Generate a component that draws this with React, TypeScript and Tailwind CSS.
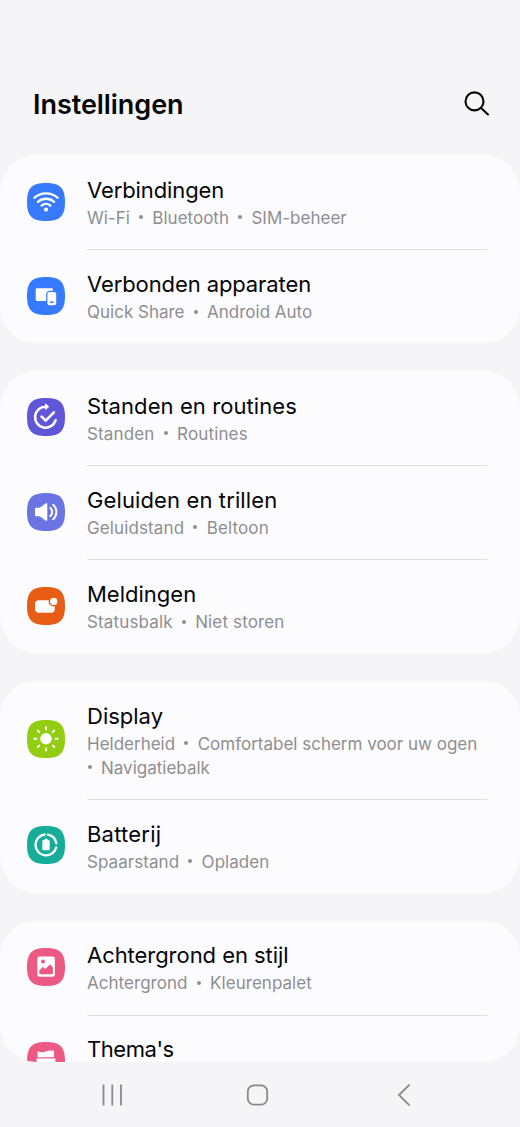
import type { ReactNode } from "react";

interface SettingItem {
    title: string;
    titleClass?: string; // Letter spacing for the title
    lines: string[][]; // Each line holds the parts that are separated by bullets
    linesClass?: string;
    color: string;
    icon: ReactNode;
}

const WifiIcon = (
    <g fill="none" stroke="#fff" strokeWidth="2.3" strokeLinecap="round">
        <path d="M7.3 14.8a17.6 17.6 0 0 1 23.4 0" />
        <path d="M10.9 18.9a12 12 0 0 1 16.2 0" />
        <path d="M14.6 22.6a6.6 6.6 0 0 1 8.8 0" />
        <circle cx="19" cy="26.6" r="2.1" fill="#fff" stroke="none" />
    </g>
);

const DevicesIcon = (
    <g>
        <rect x="8.7" y="11.2" width="17.2" height="12.8" rx="1.4" fill="#fff" />
        <path d="M19.2 24.6v-7.3c0-2 1.4-3.6 3.4-3.6h4v10.9z" fill="#387aff" />
        <rect x="20.4" y="14.9" width="8.8" height="13.4" rx="2" fill="#fff" />
        <path d="M23.6 25.2h2.4" stroke="#387aff" strokeWidth="1.6" strokeLinecap="round" />
    </g>
);

const RoutinesIcon = (
    <g fill="none" stroke="#fff" strokeWidth="2.6" strokeLinecap="round" strokeLinejoin="round">
        <path d="M18.6 8.7a10.5 10.5 0 1 0 10 13.6" />
        <path d="M14.6 18.6l4.1 4 8.2-8.2" />
        <path d="M18.8 6.2l3 2.5-3 2.5z" fill="#fff" strokeWidth="1" />
    </g>
);

const SoundIcon = (
    <g fill="none" stroke="#fff" strokeWidth="2" strokeLinecap="round">
        <path
            d="M9.3 14.7h3.4l6.3-4.5c.6-.4 1.3 0 1.3.7v16.2c0 .7-.7 1.1-1.3.7l-6.3-4.5H9.3c-.8 0-1.3-.5-1.3-1.3v-6c0-.8.5-1.3 1.3-1.3z"
            fill="#fff"
            stroke="none"
        />
        <path d="M23.4 14.9a5.6 5.6 0 0 1 0 8.2" />
        <path d="M26.2 11.8a9.8 9.8 0 0 1 0 14.4" />
    </g>
);

const NotificationIcon = (
    <g>
        <rect x="8" y="13.2" width="19.8" height="12.6" rx="4" fill="#fff" />
        <circle cx="26.7" cy="14.4" r="5.1" fill="#e85d16" />
        <circle cx="26.7" cy="14.4" r="3.6" fill="#fff" />
    </g>
);

const DisplayIcon = (
    <g stroke="#fff" strokeWidth="2" strokeLinecap="round">
        <circle cx="19" cy="18.8" r="5.7" fill="#fff" stroke="none" />
        {[0, 45, 90, 135, 180, 225, 270, 315].map((angle) => (
            <path key={angle} d="M19 9.2V7.2" transform={`rotate(${angle} 19 18.8)`} />
        ))}
    </g>
);

const BatteryIcon = (
    <g fill="none" stroke="#fff" strokeWidth="2.3">
        <path d="M17.6 8.5a10.5 10.5 0 1 0 11.6 12.9" strokeLinecap="round" />
        <path d="M21 8.7a10.5 10.5 0 0 1 8.3 8.3" strokeLinecap="round" />
        <path
            d="M17.4 13.6c0-.5.3-.8.8-.8h1.6c.5 0 .8.3.8.8v.5h.7c.8 0 1.4.6 1.4 1.4v7.4c0 .8-.6 1.4-1.4 1.4h-4.6c-.8 0-1.4-.6-1.4-1.4v-7.4c0-.8.6-1.4 1.4-1.4h.7z"
            fill="#fff"
            stroke="none"
        />
    </g>
);

const WallpaperIcon = (
    <g>
        <rect x="10.3" y="8.5" width="17.6" height="20.2" rx="2.6" fill="#fff" />
        <circle cx="16" cy="13.4" r="2" fill="#ed5985" />
        <path
            d="M12.3 22.6l2.8-3c.5-.5 1.1-.5 1.6 0l1.6 1.5 4-4c.5-.5 1.1-.5 1.6 0l2 2.3v5.8c0 .6-.5 1.1-1.1 1.1H13.4c-.6 0-1.1-.5-1.1-1.1z"
            fill="#ed5985"
        />
    </g>
);

const ThemesIcon = (
    <g fill="#fff">
        <path d="M10.6 9.2c3 1.3 5.3 1.2 8.2.2 3-1 5.6-1 8.2-.5v6.4H10.6z" />
        <path d="M9.6 16.6h18.8v8a2 2 0 0 1-2 2H11.6a2 2 0 0 1-2-2z" />
    </g>
);

const groups: SettingItem[][] = [
    [
        {
            title: "Verbindingen",
            titleClass: "tracking-[-0.1px]",
            lines: [["Wi-Fi", "Bluetooth", "SIM-beheer"]],
            color: "#387aff",
            icon: WifiIcon,
        },
        {
            title: "Verbonden apparaten",
            titleClass: "tracking-[-0.1px]",
            lines: [["Quick Share", "Android Auto"]],
            color: "#387aff",
            icon: DevicesIcon,
        },
    ],
    [
        {
            title: "Standen en routines",
            titleClass: "tracking-[0.08px]",
            lines: [["Standen", "Routines"]],
            linesClass: "tracking-[0.15px]",
            color: "#6256d8",
            icon: RoutinesIcon,
        },
        {
            title: "Geluiden en trillen",
            titleClass: "tracking-[0.12px]",
            lines: [["Geluidstand", "Beltoon"]],
            linesClass: "tracking-[0.12px]",
            color: "#6b73e5",
            icon: SoundIcon,
        },
        {
            title: "Meldingen",
            lines: [["Statusbalk", "Niet storen"]],
            linesClass: "tracking-[0.14px]",
            color: "#e85d16",
            icon: NotificationIcon,
        },
    ],
    [
        {
            title: "Display",
            lines: [["Helderheid", "Comfortabel scherm voor uw ogen"], ["", "Navigatiebalk"]],
            color: "#93cd12",
            icon: DisplayIcon,
        },
        {
            title: "Batterij",
            titleClass: "tracking-[0.22px]",
            lines: [["Spaarstand", "Opladen"]],
            linesClass: "tracking-[0.05px]",
            color: "#16ae9a",
            icon: BatteryIcon,
        },
    ],
    [
        {
            title: "Achtergrond en stijl",
            titleClass: "tracking-[-0.05px]",
            lines: [["Achtergrond", "Kleurenpalet"]],
            linesClass: "tracking-[0.04px]",
            color: "#ed5985",
            icon: WallpaperIcon,
        },
        {
            title: "Thema's",
            titleClass: "tracking-[-0.45px]",
            lines: [],
            color: "#ed5985",
            icon: ThemesIcon,
        },
    ],
];

function SettingLine({ parts }: { parts: string[] }) {
    return (
        <div className="flex h-6 items-center whitespace-nowrap">
            {parts.map((part, index) => (
                <span key={index} className="flex items-center">
                    {index > 0 && (
                        <span
                            className={`flex items-center pb-0.5 ${parts[0] ? "w-[22.5px] justify-center" : "w-[14px] pl-[1px]"}`}
                        >
                            <span className="size-1 rounded-full bg-[#8e8e91]" />
                        </span>
                    )}
                    {part}
                </span>
            ))}
        </div>
    );
}

function SettingRow({ item, divider }: { item: SettingItem; divider: boolean }) {
    return (
        <div className="flex min-h-[94.1px] pr-[33px] pl-[27px]">
            <div className="flex w-[60px] shrink-0 items-center pb-px">
                <svg width="38" height="38" viewBox="0 0 38 38">
                    <path
                        d="M19 0C33 0 38 5 38 19S33 38 19 38 0 33 0 19 5 0 19 0z"
                        fill={item.color}
                    />
                    {item.icon}
                </svg>
            </div>
            <div
                className={`min-w-0 grow pb-[18.65px] ${divider ? "border-t border-[#dededf] pt-[17.7px]" : "pt-[18.7px]"}`}
            >
                <div
                    className={`h-[32.75px] text-[22px] leading-8 whitespace-nowrap text-[#050506] ${item.titleClass ?? ""}`}
                >
                    {item.title}
                </div>
                <div className={`text-[17px] text-[#8e8e91] ${item.linesClass ?? ""}`}>
                    {item.lines.map((parts, index) => (
                        <SettingLine key={index} parts={parts} />
                    ))}
                </div>
            </div>
        </div>
    );
}

function NavigationBar() {
    return (
        <nav className="flex h-[65px] items-center gap-[123px] pl-[101px] text-[#8a8a8c]">
            <svg width="22" height="22" viewBox="0 0 22 22" fill="none" stroke="currentColor" strokeWidth="1.8">
                <path d="M2.5 .5v21M11.3 .5v21M20 .5v21" />
            </svg>
            <svg width="23" height="24" viewBox="0 0 23 24" fill="none" stroke="currentColor" strokeWidth="1.8">
                <rect x="1.8" y="2.3" width="19.4" height="19.4" rx="6.2" />
            </svg>
            <svg width="20" height="24" viewBox="0 0 20 24" fill="none" stroke="currentColor" strokeWidth="1.8">
                <path d="M17.5 1.7L7 12l10.5 10.3" />
            </svg>
        </nav>
    );
}

export default function App() {
    return (
        <div className="h-[1127px] w-[520px] overflow-hidden bg-[#f5f5f7] font-['Inter',sans-serif]">
            <div className="flex h-[1062px] flex-col overflow-hidden rounded-b-[36px]">
                <header className="flex h-[155px] shrink-0 items-start justify-between pt-[85px] pr-[30px] pl-[33px]">
                    <h1 className="text-[27px] leading-10 font-semibold tracking-[-0.05px] text-[#050506]">
                        Instellingen
                    </h1>
                    <button aria-label="Zoeken" className="mt-1.5">
                        <svg
                            width="26"
                            height="26"
                            viewBox="0 0 26 26"
                            fill="none"
                            stroke="#050506"
                            strokeWidth="2.1"
                            strokeLinecap="round"
                        >
                            <circle cx="10.5" cy="10.4" r="9" />
                            <path d="M17 17l7 6.5" />
                        </svg>
                    </button>
                </header>
                <main className="flex flex-col gap-[27.7px]">
                    {groups.map((items, index) => (
                        <section key={index} className="shrink-0 rounded-[36px] bg-[#fcfcfe]">
                            {items.map((item, i) => (
                                <SettingRow key={item.title} item={item} divider={i > 0} />
                            ))}
                        </section>
                    ))}
                </main>
            </div>
            <NavigationBar />
        </div>
    );
}
